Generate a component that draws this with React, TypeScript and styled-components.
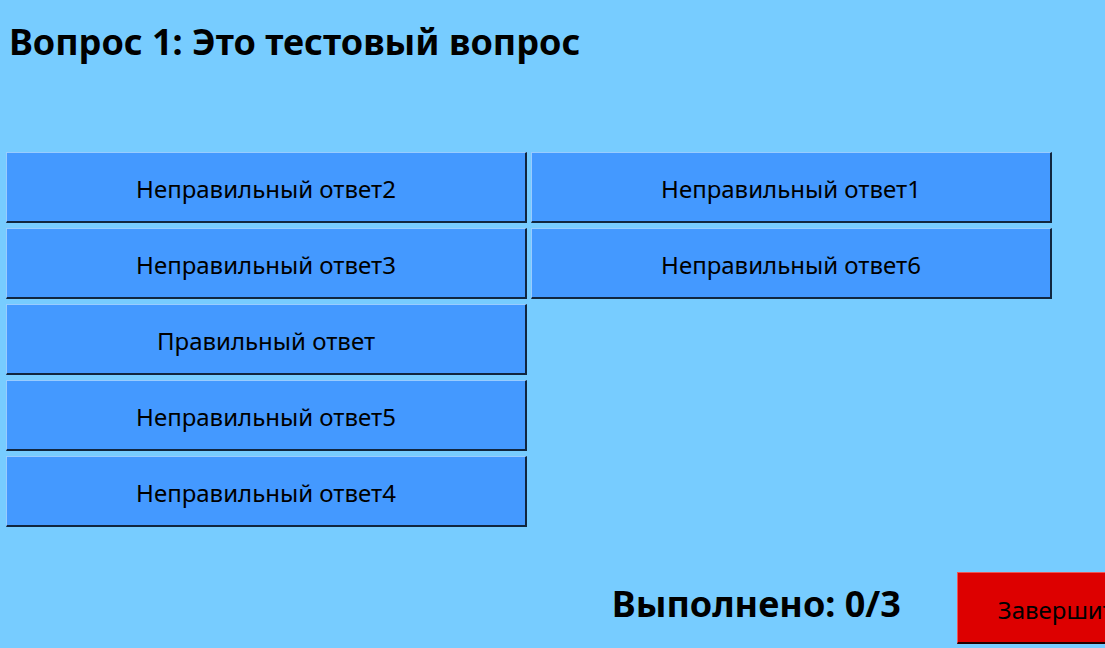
import React from 'react';
import styled, { createGlobalStyle } from 'styled-components';

const GlobalStyle = createGlobalStyle`
  * { box-sizing: border-box; }
  body {
    margin: 0;
    background: #77ccff;
    color: #000;
    font-family: 'Noto Sans', 'Open Sans', sans-serif;
    overflow: hidden;
  }
`;

const Page = styled.main`
  min-height: 100vh;
  display: flex;
  flex-direction: column;
  padding: 16px 0 4px 6px;
`;

const Question = styled.h1`
  margin: 0;
  padding: 0 0 84px 3px;
  font-size: 36px;
  line-height: 52px;
  font-weight: 700;
`;

const Answers = styled.div`
  display: grid;
  grid-template-columns: 1fr 1fr;
  gap: 4px;
  margin-right: 53px;
`;

const Column = styled.div`
  display: flex;
  flex-direction: column;
  gap: 4px;
`;

const Button = styled.button<{ $danger?: boolean }>`
  height: 72px;
  flex: none;
  padding: 4px 40px 0;
  border: 1px solid;
  border-width: 1px 2px 2px 1px;
  border-color: ${(p) => (p.$danger ? '#ee5555 #220000 #220000 #ee5555' : '#99ccff #11263f #11263f #99ccff')};
  border-radius: 0;
  background: ${(p) => (p.$danger ? '#dd0000' : '#4499ff')};
  color: #000;
  font: inherit;
  font-size: 24px;
  line-height: 36px;
  white-space: nowrap;
`;

const AnswerButton = styled(Button)`
  height: 71px;
  margin-bottom: 1px;
  padding-top: 3px;
`;

const Footer = styled.footer`
  display: flex;
  justify-content: flex-end;
  align-items: center;
  gap: 56px;
  margin-top: auto;
  margin-right: -64px;
`;

const Progress = styled.p`
  margin: 0;
  padding-bottom: 8px;
  font-size: 36px;
  line-height: 52px;
  font-weight: 700;
`;

const columns = [
  ['Неправильный ответ2', 'Неправильный ответ3', 'Правильный ответ', 'Неправильный ответ5', 'Неправильный ответ4'],
  ['Неправильный ответ1', 'Неправильный ответ6'],
];

export default function App() {
  return (
    <>
      <GlobalStyle />
      <Page>
        <Question>Вопрос 1: Это тестовый вопрос</Question>
        <Answers>
          {columns.map((answers, i) => (
            <Column key={i}>
              {answers.map((answer) => (
                <AnswerButton type="button" key={answer}>{answer}</AnswerButton>
              ))}
            </Column>
          ))}
        </Answers>
        <Footer>
          <Progress>Выполнено: 0/3</Progress>
          <Button type="button" $danger>Завершить</Button>
        </Footer>
      </Page>
    </>
  );
}
